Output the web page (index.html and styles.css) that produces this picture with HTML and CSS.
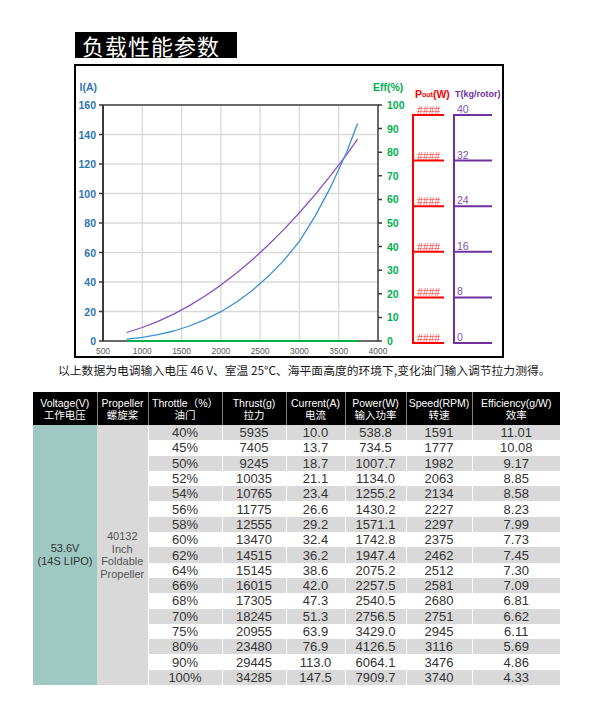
FILE: index.html
```html
<!DOCTYPE html>
<html lang="zh">
<head>
<meta charset="utf-8">
<title>负载性能参数</title>
<link rel="stylesheet" href="styles.css">
</head>
<body>
<div class="page">
  <h1 class="title">负载性能参数</h1>
  <div class="chart">
    <svg class="chart-svg" width="426" height="290" viewBox="76 65 426 290" xmlns="http://www.w3.org/2000/svg">
      <g class="grid" stroke="#d9d9d9" stroke-width="1.3">
        <line x1="142.3" y1="104" x2="142.3" y2="340"/>
        <line x1="181.6" y1="104" x2="181.6" y2="340"/>
        <line x1="220.9" y1="104" x2="220.9" y2="340"/>
        <line x1="260.1" y1="104" x2="260.1" y2="340"/>
        <line x1="299.4" y1="104" x2="299.4" y2="340"/>
        <line x1="338.7" y1="104" x2="338.7" y2="340"/>
        <line x1="103" y1="310.5" x2="378" y2="310.5"/>
        <line x1="103" y1="281" x2="378" y2="281"/>
        <line x1="103" y1="251.5" x2="378" y2="251.5"/>
        <line x1="103" y1="222" x2="378" y2="222"/>
        <line x1="103" y1="192.5" x2="378" y2="192.5"/>
        <line x1="103" y1="163" x2="378" y2="163"/>
        <line x1="103" y1="133.5" x2="378" y2="133.5"/>
      </g>
      <g stroke="#3a3a3a" stroke-width="1.5" fill="none">
        <rect x="103" y="104" width="275" height="236"/>
        <line x1="103" y1="104" x2="103" y2="340" stroke-width="2"/>
        <path d="M99 104H103M99 133.5H103M99 163H103M99 192.5H103M99 222H103M99 251.5H103M99 281H103M99 310.5H103M99 340H103"/>
        <path d="M378 104H382M378 127.6H382M378 151.2H382M378 174.8H382M378 198.4H382M378 222H382M378 245.6H382M378 269.2H382M378 292.8H382M378 316.4H382M378 340H382"/>
      </g>
      <g class="lab-left" fill="#2e75b6" font-family="Liberation Sans, Arial, sans-serif" font-size="10.5" font-weight="bold" text-anchor="end" dominant-baseline="central">
        <text x="96" y="104">160</text>
        <text x="96" y="133.5">140</text>
        <text x="96" y="163">120</text>
        <text x="96" y="192.5">100</text>
        <text x="96" y="222">80</text>
        <text x="96" y="251.5">60</text>
        <text x="96" y="281">40</text>
        <text x="96" y="310.5">20</text>
        <text x="96" y="340">0</text>
        <text x="97" y="86">I(A)</text>
      </g>
      <g class="lab-right" fill="#00b050" font-family="Liberation Sans, Arial, sans-serif" font-size="10.5" font-weight="bold" dominant-baseline="central">
        <text x="387" y="104">100</text>
        <text x="387" y="127.6">90</text>
        <text x="387" y="151.2">80</text>
        <text x="387" y="174.8">70</text>
        <text x="387" y="198.4">60</text>
        <text x="387" y="222">50</text>
        <text x="387" y="245.6">40</text>
        <text x="387" y="269.2">30</text>
        <text x="387" y="292.8">20</text>
        <text x="387" y="316.4">10</text>
        <text x="387" y="340">0</text>
        <text x="373" y="86">Eff(%)</text>
      </g>
      <g class="lab-x" fill="#595959" font-family="Liberation Sans, Arial, sans-serif" font-size="8.5" text-anchor="middle" dominant-baseline="central">
        <text x="103" y="350">500</text>
        <text x="142.3" y="350">1000</text>
        <text x="181.6" y="350">1500</text>
        <text x="220.9" y="350">2000</text>
        <text x="260.1" y="350">2500</text>
        <text x="299.4" y="350">3000</text>
        <text x="338.7" y="350">3500</text>
        <text x="378" y="350">4000</text>
      </g>
      <line x1="127" y1="340" x2="358" y2="340" stroke="#00b050" stroke-width="2"/>
      <polyline fill="none" stroke="#8a4fc0" stroke-width="1.3" stroke-linejoin="round" points="126.6,331.5 142.3,326.5 158,320.4 173.7,313.1 189.4,304.6 205.1,295 220.9,284.1 236.6,272.1 252.3,258.8 268,244.3 283.7,228.6 299.4,211.7 315.1,193.6 330.9,174.2 346.6,153.6 357.6,138.1"/>
      <polyline fill="none" stroke="#3b8fd6" stroke-width="1.3" stroke-linejoin="round" points="126.6,338.1 142.3,336.3 158,333.7 173.7,330 189.4,325 205.1,318.6 220.9,310.7 236.6,301 252.3,289.4 268,275.6 283.7,259.6 299.4,240.3 315.1,215.1 330.9,185.6 346.6,151.2 357.6,122.4"/>
      <g class="pout">
        <text x="415" y="93" fill="#ff0000" font-family="Liberation Sans, Arial, sans-serif" font-size="10.5" font-weight="bold" dominant-baseline="central">P<tspan font-size="7">out</tspan>(W)</text>
        <path d="M413 113V342M412 114H444M413 159.6H444M413 205.2H444M413 250.8H444M413 296.4H444M412 342H444" stroke="#ff0000" stroke-width="2" fill="none"/>
        <g fill="#ff3030" font-family="Liberation Sans, Arial, sans-serif" font-size="10.5" font-style="italic" dominant-baseline="central">
          <text x="417" y="109" textLength="23" lengthAdjust="spacingAndGlyphs">####</text>
          <text x="417" y="154.6" textLength="23" lengthAdjust="spacingAndGlyphs">####</text>
          <text x="417" y="200.2" textLength="23" lengthAdjust="spacingAndGlyphs">####</text>
          <text x="417" y="245.8" textLength="23" lengthAdjust="spacingAndGlyphs">####</text>
          <text x="417" y="291.4" textLength="23" lengthAdjust="spacingAndGlyphs">####</text>
          <text x="417" y="337" textLength="23" lengthAdjust="spacingAndGlyphs">####</text>
        </g>
      </g>
      <g class="thrust">
        <text x="455" y="93" fill="#7030a0" font-family="Liberation Sans, Arial, sans-serif" font-size="9" font-weight="bold" dominant-baseline="central">T(kg/rotor)</text>
        <path d="M454 113V342M453 114H492M454 159.6H492M454 205.2H492M454 250.8H492M454 296.4H492M453 342H492" stroke="#7030a0" stroke-width="2" fill="none"/>
        <g fill="#7f4fb5" font-family="Liberation Sans, Arial, sans-serif" font-size="10.5" dominant-baseline="central">
          <text x="457" y="108">40</text>
          <text x="457" y="153.6">32</text>
          <text x="457" y="199.2">24</text>
          <text x="457" y="244.8">16</text>
          <text x="457" y="290.4">8</text>
          <text x="457" y="336">0</text>
        </g>
      </g>
    </svg>
  </div>
  <p class="caption">以上数据为电调输入电压 46 V、室温 25°C、海平面高度的环境下,变化油门输入调节拉力测得。</p>
  <table class="perf">
    <colgroup>
      <col class="c-volt"><col class="c-prop"><col class="c-thr"><col class="c-thrust"><col class="c-cur"><col class="c-pow"><col class="c-spd"><col class="c-eff">
    </colgroup>
    <thead>
      <tr>
        <th>Voltage(V)<br>工作电压</th>
        <th>Propeller<br>螺旋桨</th>
        <th>Throttle（%）<br>油门</th>
        <th>Thrust(g)<br>拉力</th>
        <th>Current(A)<br>电流</th>
        <th>Power(W)<br>输入功率</th>
        <th>Speed(RPM)<br>转速</th>
        <th>Efficiency(g/W)<br>效率</th>
      </tr>
    </thead>
    <tbody>
      <tr class="g"><td class="volt" rowspan="17">53.6V<br>(14S LIPO)</td><td class="prop" rowspan="17">40132<br>Inch<br>Foldable<br>Propeller</td><td>40%</td><td>5935</td><td>10.0</td><td>538.8</td><td>1591</td><td>11.01</td></tr>
      <tr><td>45%</td><td>7405</td><td>13.7</td><td>734.5</td><td>1777</td><td>10.08</td></tr>
      <tr class="g"><td>50%</td><td>9245</td><td>18.7</td><td>1007.7</td><td>1982</td><td>9.17</td></tr>
      <tr><td>52%</td><td>10035</td><td>21.1</td><td>1134.0</td><td>2063</td><td>8.85</td></tr>
      <tr class="g"><td>54%</td><td>10765</td><td>23.4</td><td>1255.2</td><td>2134</td><td>8.58</td></tr>
      <tr><td>56%</td><td>11775</td><td>26.6</td><td>1430.2</td><td>2227</td><td>8.23</td></tr>
      <tr class="g"><td>58%</td><td>12555</td><td>29.2</td><td>1571.1</td><td>2297</td><td>7.99</td></tr>
      <tr><td>60%</td><td>13470</td><td>32.4</td><td>1742.8</td><td>2375</td><td>7.73</td></tr>
      <tr class="g"><td>62%</td><td>14515</td><td>36.2</td><td>1947.4</td><td>2462</td><td>7.45</td></tr>
      <tr><td>64%</td><td>15145</td><td>38.6</td><td>2075.2</td><td>2512</td><td>7.30</td></tr>
      <tr class="g"><td>66%</td><td>16015</td><td>42.0</td><td>2257.5</td><td>2581</td><td>7.09</td></tr>
      <tr><td>68%</td><td>17305</td><td>47.3</td><td>2540.5</td><td>2680</td><td>6.81</td></tr>
      <tr class="g"><td>70%</td><td>18245</td><td>51.3</td><td>2756.5</td><td>2751</td><td>6.62</td></tr>
      <tr><td>75%</td><td>20955</td><td>63.9</td><td>3429.0</td><td>2945</td><td>6.11</td></tr>
      <tr class="g"><td>80%</td><td>23480</td><td>76.9</td><td>4126.5</td><td>3116</td><td>5.69</td></tr>
      <tr><td>90%</td><td>29445</td><td>113.0</td><td>6064.1</td><td>3476</td><td>4.86</td></tr>
      <tr class="g"><td>100%</td><td>34285</td><td>147.5</td><td>7909.7</td><td>3740</td><td>4.33</td></tr>
    </tbody>
  </table>
</div>
</body>
</html>
```

FILE: styles.css
```css
html, body {
  margin: 0;
  padding: 0;
  background: #fff;
}

body {
  font-family: "Liberation Sans", "Noto Sans CJK SC", sans-serif;
  color: #222;
}

.page {
  width: 600px;
  display: flex;
  flex-direction: column;
  align-items: flex-start;
}

.title {
  margin: 32px 0 0 75px;
  height: 26px;
  padding: 0 17px 0 7px;
  background: #000;
  color: #fff;
  font-family: "Noto Sans CJK SC", sans-serif;
  font-weight: 400;
  font-size: 22px;
  line-height: 26px;
  letter-spacing: 1px;
}

.chart {
  margin: 6px 0 0 74px;
  width: 426px;
  height: 290px;
  border: 2px solid #000;
}

.chart-svg {
  display: block;
}

.caption {
  margin: 4px 0 0 58px;
  font-family: "Noto Sans CJK SC", sans-serif;
  font-size: 11.8px;
  line-height: 16px;
  color: #1a1a1a;
  white-space: nowrap;
}

.perf {
  margin: 14px 0 0 33px;
  width: 527px;
  border-collapse: collapse;
  table-layout: fixed;
}

.c-volt { width: 64px; }
.c-prop { width: 51px; }
.c-thr { width: 74px; }
.c-thrust { width: 64px; }
.c-cur { width: 59px; }
.c-pow { width: 61px; }
.c-spd { width: 66px; }
.c-eff { width: 88px; }

.perf th {
  height: 33px;
  padding: 0;
  background: #000;
  color: #fff;
  font-weight: 400;
  font-size: 10.5px;
  line-height: 12px;
  text-align: center;
  border-left: 1px solid #7f7f7f;
  white-space: nowrap;
  overflow: hidden;
}

.perf th:first-child {
  border-left: none;
}

.perf td {
  height: 15.3px;
  padding: 0;
  font-size: 13px;
  line-height: 15px;
  text-align: center;
  color: #333;
  border-left: 1px solid #fff;
  white-space: nowrap;
}

.perf tr.g td {
  background: #d9d9d9;
}

.perf tr td.volt {
  background: #9fc8c3;
  font-size: 11px;
  line-height: 13px;
  color: #333;
  border-left: none;
}

.perf tr td.prop {
  background: #d9d9d9;
  font-size: 11px;
  line-height: 12.5px;
  color: #555;
  border-left: none;
}
```
